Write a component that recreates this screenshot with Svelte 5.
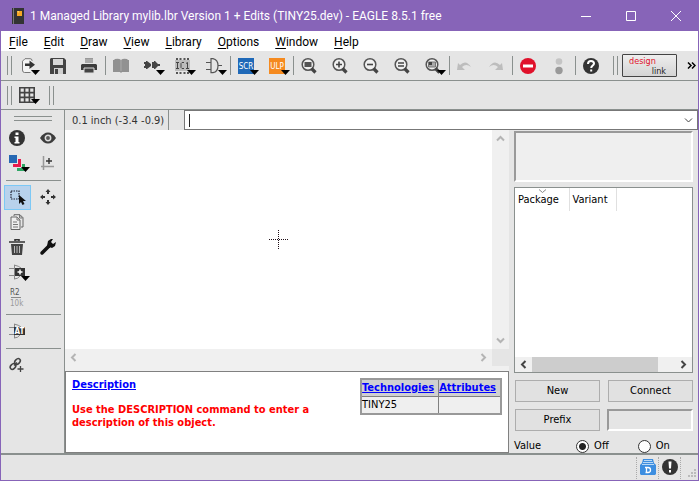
<script>
  const menus = ['File', 'Edit', 'Draw', 'View', 'Library', 'Options', 'Window', 'Help'];
  const toolbar = [
    ['export', 'save', 'print'],
    ['book', 'device', 'package', 'symbol'],
    ['scr', 'ulp'],
    ['fit', 'zoomin', 'zoomout', 'redraw', 'select'],
    ['undo', 'redo'],
    ['stop', 'go'],
    ['help']
  ];
  const palette = [
    [['info', 'show'], ['layers', 'mark']],
    [['group', 'move'], ['copy'], ['delete', 'change'], ['add'], ['value']],
    [['attribute']],
    [['link']]
  ];
  const withArrow = ['export', 'device', 'package', 'symbol', 'scr', 'ulp', 'select', 'grid', 'layers', 'add'];
  let value = $state('off');
  let command = $state('');
  let prefix = $state('');
</script>

{#snippet lens()}
  <circle cx="7" cy="6.5" r="5.8" fill="#f0f0f0" stroke="#555" stroke-width="1.5" />
  <path d="M10.500 10.500l4 4" stroke="#444" stroke-width="3.2" />
{/snippet}

{#snippet icon(name)}
  <svg class="icon" width="22" height="18" viewBox="0 0 22 18" fill="none" aria-hidden="true">
    {#if name === 'export'}
      <path d="M13 3V2.500Q13 .7 11 .7H6L3.500 3.200V12q0 2.500 2 2.500h6" stroke="#777" fill="#f4f4f4" />
      <path d="M6 5.500h4.500V2.500L16 6.800l-5.500 4.200V8H6z" fill="#333" />
    {:else if name === 'save'}
      <path d="M1 0h13l2 2v14H0V1z" fill="#444" />
      <path d="M3 1h10v6H3z" fill="#d8d8d8" /><path d="M4 10h9v6H4z" fill="#d0d0d0" /><path d="M5 11h3v5H5z" fill="#444" />
    {:else if name === 'print'}
      <path d="M4 0h8v5H4z" fill="#999" /><path d="M4 2h8M4 4h8" stroke="#bbb" />
      <path d="M1 6h14l1 1v5H0V7z" fill="#3c3c3c" /><path d="M3 10h10v5H3z" fill="#444" stroke="#ddd" />
    {:else if name === 'book'}
      <path d="M0 2h1l1-1q4-1 6 1 2-2 6-1l1 1h1v12H9l-1 1-1-1H0z" fill="#919191" /><path d="M8 2v11" stroke="#aaa" />
    {:else if name === 'device'}
      <path d="M0 4h2V3h1l4 3h1V4h2V3h1l3 3h2v2h-2l-3 3h-1v-1H8V8H7l-4 3H2v-1H0V8h1V6H0z" fill="#444" />
      <path d="M7.500 3v8" stroke="#e5e5e5" />
    {:else if name === 'package'}
      <path d="M2 0v16M5.500 0v16M9.500 0v16M13 0v16" stroke="#555" stroke-width="2" stroke-dasharray="2 12" />
      <path d="M0 2h15v11H0z" fill="#bcbcbc" />
      <path d="M1 4.500h3M2.500 4.500v6M1 10.500h3M9 4.500H7L6 5.500V9.500l1 1h2M11 5.500l1.500-1v6M11 10.500h3" stroke="#444" />
    {:else if name === 'symbol'}
      <path d="M5 .7h2q5 1 5 7t-5 7H5zM0 4.500h5M0 11.500h5M12 7.500h4" stroke="#555" stroke-width="1.200" />
    {:else if name === 'scr' || name === 'ulp'}
      <path d="M0 0h16v16H0z" fill={name === 'scr' ? '#1f69b8' : '#f58a1f'} />
      {#if name === 'scr'}
        <text x="8" y="11" text-anchor="middle" class="tag">SCR</text>
      {:else}
        <text x="8" y="11" text-anchor="middle" class="tag">ULP</text>
      {/if}
    {:else if name === 'fit'}
      {@render lens()}<path d="M3.500 4h7v5h-7z" fill="#555" />
    {:else if name === 'zoomin'}
      {@render lens()}<path d="M7 3.500v6M4 6.500h6" stroke="#444" stroke-width="1.600" />
    {:else if name === 'zoomout'}
      {@render lens()}<path d="M4 6.500h6" stroke="#444" stroke-width="1.600" />
    {:else if name === 'redraw'}
      {@render lens()}<path d="M4 5h6M4 8h6" stroke="#444" stroke-width="1.400" />
    {:else if name === 'select'}
      {@render lens()}<path d="M3.500 4h7v5h-7z" fill="#aaa" stroke="#777" /><path d="M4 4h3v3H4z" fill="#444" />
    {:else if name === 'undo'}
      <path d="M0 12l1-7 2 2q6-6 11 2-5-4-9 0l3 3z" fill="#bdbdbd" />
    {:else if name === 'redo'}
      <path d="M15 12l-1-7-2 2Q6 1 1 9q5-4 9 0l-3 3z" fill="#bdbdbd" />
    {:else if name === 'stop'}
      <circle cx="8" cy="8" r="8" fill="#e0112b" /><path d="M3 6.500h10v3H3z" fill="#fff" />
    {:else if name === 'go'}
      <circle cx="8" cy="3.500" r="3.300" fill="#c4c4c4" /><circle cx="8" cy="12.500" r="3.700" fill="#999" />
    {:else if name === 'help'}
      <circle cx="8" cy="8" r="8" fill="#333" />
      <path d="M5 6q0-3 3-3t3 2.500c0 2-2.800 2-2.800 4.500M8.200 11.500V13.500" stroke="#fff" stroke-width="2" />
    {:else if name === 'grid'}
      <path d="M.8.8h14.400v14.400H.8zM.8 5.600h14.400M.8 10.400h14.400M5.600.8v14.400M10.400.8v14.400" stroke="#444" stroke-width="1.600" />
    {:else if name === 'info'}
      <circle cx="8" cy="8" r="8" fill="#333" /><path d="M6.500 2.500h3v2.500h-3zM5.500 6.500h4v5.500h1v1.500h-5V12h1V8h-1z" fill="#fff" />
    {:else if name === 'show'}
      <path d="M0 8q3.500-5.500 8-5.500T16 8q-3.500 5.500-8 5.500T0 8z" fill="#3c3c3c" />
      <circle cx="8" cy="8" r="2.700" fill="#555" stroke="#ddd" stroke-width="1.500" />
    {:else if name === 'layers'}
      <path d="M8 13h5V9h3v7H8z" fill="#2fa765" /><path d="M9 4h3v8H4V9h5z" fill="#e8194b" /><path d="M0 0h8v8H0z" fill="#2668b3" />
    {:else if name === 'mark'}
      <path d="M3.500 1v14M1 11.500h13" stroke="#999" stroke-width="1.500" /><path d="M9 3v6M6 6h6" stroke="#333" stroke-width="1.400" />
    {:else if name === 'group'}
      <path d="M2 2h8v8H2z" stroke="#223" stroke-width="1.200" stroke-dasharray="1.500 1" /><path d="M10 6v9l2-2 1.500 3 2-1-1.500-3h3z" fill="#111" />
    {:else if name === 'move'}
      <path d="M8 0l2.500 3H9v2H7V3H5.500zM8 16l2.500-3H9v-2H7v2H5.500zM0 8l3-2.500V7h2v2H3v1.500zM16 8l-3-2.500V7h-2v2h2v1.500z" fill="#333" />
    {:else if name === 'copy'}
      <path d="M5 2V.7h6l3 3V13h-2" stroke="#666" /><path d="M2 3h6l3 3v9.500H2z" stroke="#666" fill="#eee" />
      <path d="M8 3v3h3zM10.500 1v3h3zM4 8h4M4 10.500h5M4 13h5" stroke="#777" />
    {:else if name === 'delete'}
      <path d="M6 2V.7h4V2M0 3h16" stroke="#333" stroke-width="1.600" /><path d="M2 5h12l-1 11H3z" fill="#444" />
      <path d="M5.500 7v7M8 7v7M10.500 7v7" stroke="#bbb" />
    {:else if name === 'change'}
      <path d="M2 14l7-7" stroke="#111" stroke-width="3.500" stroke-linecap="round" /><path d="M7 7L8 2l3-2h2l-2 3 2 2 3-2-1 4-3 2z" fill="#111" />
    {:else if name === 'add'}
      <path d="M5 1q5 1 7 3M5 15q4 0 6-3M5.500 1v14M0 4.500h5M0 11.500h5" stroke="#888" /><path d="M6 4h10v8H6z" fill="#333" />
      <path d="M11 5.500v5M8.500 8h5" stroke="#fff" stroke-width="1.500" />
    {:else if name === 'value'}
      <text x="1" y="6" class="val">R2</text><path d="M2 8.500h10" stroke="#888" /><text x="1" y="17" class="val pale">10k</text>
    {:else if name === 'attribute'}
      <path d="M5 1q5 1 7 3M5 15q4 0 6-3M5.500 1v14M0 4.500h5M0 11.500h5" stroke="#888" /><path d="M5 4h11v8H5z" fill="#333" />
      <text x="10.500" y="11" text-anchor="middle" class="at">AT</text>
    {:else if name === 'link'}
      <ellipse cx="8.500" cy="4.500" rx="3.200" ry="2.300" transform="rotate(-45 8.500 4.500)" stroke="#444" stroke-width="1.500" />
      <ellipse cx="4" cy="9.500" rx="3.200" ry="2.300" transform="rotate(-45 4 9.500)" stroke="#444" stroke-width="1.500" />
      <path d="M5 8.500l3-3" stroke="#444" stroke-width="1.500" /><path d="M11.500 9v6M8.500 12h6" stroke="#444" stroke-width="1.300" />
    {/if}
    {#if withArrow.includes(name)}
      <path d="M12 12h9l-4.500 5z" fill="#000" />
    {/if}
  </svg>
{/snippet}

{#snippet chevron(dir)}
  <svg width="9" height="9" viewBox="0 0 9 9" fill="none" aria-hidden="true">
    {#if dir === 'left'}<path d="M6.500 1L3 4.500 6.500 8" />
    {:else if dir === 'right'}<path d="M2.500 1L6 4.500 2.500 8" />
    {:else if dir === 'up'}<path d="M1 6.500L4.500 3 8 6.500" />
    {:else}<path d="M1 2.500L4.500 6 8 2.500" />{/if}
  </svg>
{/snippet}

<div class="window">
  <header>
    <svg width="14" height="16" viewBox="0 0 14 16" aria-hidden="true">
      <path d="M1 0h12v16H1z" fill="#333" /><path d="M2.500 0v16" stroke="#777" /><path d="M6 3h5v5H6z" fill="#f6a623" /><path d="M6 3h2v2z" fill="#fbd36b" />
    </svg>
    <h1>1 Managed Library mylib.lbr Version 1 + Edits (TINY25.dev) - EAGLE 8.5.1 free</h1>
    <div class="controls">
      <button aria-label="Minimize"><svg width="10" height="10" viewBox="0 0 10 10"><path d="M0 5.500h10" /></svg></button>
      <button aria-label="Maximize"><svg width="10" height="10" viewBox="0 0 10 10"><path d="M.5.5h9v9h-9z" /></svg></button>
      <button aria-label="Close"><svg width="10" height="10" viewBox="0 0 10 10"><path d="M0 0l10 10M10 0L0 10" /></svg></button>
    </div>
  </header>

  <nav>
    {#each menus as m}
      <button><u>{m[0]}</u>{m.slice(1)}</button>
    {/each}
  </nav>

  <div class="bar">
    <i class="handle"></i>
    {#each toolbar as group, g}
      {#if g}<i class="sep"></i>{/if}
      {#each group as name}
        <button class="tool" aria-label={name}>{@render icon(name)}</button>
      {/each}
    {/each}
    <i class="handle"></i>
    <button class="design"><span>design</span><b>link</b></button>
    <button class="more" aria-label="More tools">
      <svg width="9" height="7" viewBox="0 0 9 7" fill="none"><path d="M1 .5l3 3-3 3M5 .5l3 3-3 3" stroke="#000" stroke-width="1.500" /></svg>
    </button>
  </div>
  <div class="bar low">
    <i class="handle"></i>
    <button class="tool" aria-label="grid">{@render icon('grid')}</button>
    <i class="handle"></i>
  </div>

  <main>
    <aside>
      <i class="grip"></i>
      {#each palette as group, g}
        {#if g}<hr />{/if}
        {#each group as row}
          <div class="row">
            {#each row as name}
              <button class="pal" class:active={name === 'group'} aria-label={name}>{@render icon(name)}</button>
            {/each}
          </div>
        {/each}
      {/each}
    </aside>

    <div class="work">
      <div class="command">
        <span class="coords">0.1 inch (-3.4 -0.9)</span>
        <div class="combo">
          <i class="caret"></i>
          <input type="text" aria-label="Command line" bind:value={command} />
          <button aria-label="Command history">{@render chevron('down')}</button>
        </div>
      </div>

      <div class="split">
        <section class="editor">
          <div class="canvas">
            <svg width="19" height="19" viewBox="0 0 19 19" aria-hidden="true">
              <path d="M0 9.500h19M9.500 0v19" stroke="#201018" stroke-dasharray="1 1" />
            </svg>
          </div>
          <div class="vscroll">
            <button aria-label="Scroll up">{@render chevron('up')}</button>
            <button aria-label="Scroll down">{@render chevron('down')}</button>
          </div>
          <div class="hscroll">
            <button aria-label="Scroll left">{@render chevron('left')}</button>
            <button aria-label="Scroll right">{@render chevron('right')}</button>
          </div>
          <div class="corner"></div>
          <div class="desc">
            <div class="copy">
              <a href="#description">Description</a>
              <p>Use the DESCRIPTION command to enter a description of this object.</p>
            </div>
            <table class="tech">
              <thead><tr><th><a href="#technologies">Technologies</a></th><th><a href="#attributes">Attributes</a></th></tr></thead>
              <tbody><tr><td>TINY25</td><td></td></tr></tbody>
            </table>
          </div>
        </section>

        <section class="side">
          <div class="preview"></div>
          <div class="list">
            <table>
              <thead>
                <tr>
                  <th class="pkg"><svg width="7" height="4" viewBox="0 0 7 4" fill="none"><path d="M0 .5l3.500 3L7 .5" stroke="#888" /></svg>Package</th>
                  <th class="variant">Variant</th>
                </tr>
              </thead>
            </table>
            <div class="listscroll">
              <button aria-label="Scroll list left">{@render chevron('left')}</button>
              <div class="track"><div class="thumb"></div></div>
              <button aria-label="Scroll list right">{@render chevron('right')}</button>
            </div>
          </div>
          <div class="form">
            <button>New</button>
            <button>Connect</button>
            <button>Prefix</button>
            <input type="text" aria-label="Prefix" bind:value={prefix} />
          </div>
          <div class="radios" role="radiogroup" aria-labelledby="value-label">
            <span id="value-label">Value</span>
            <label class="off"><input type="radio" name="value" value="off" bind:group={value} />Off</label>
            <label class="on"><input type="radio" name="value" value="on" bind:group={value} />On</label>
          </div>
        </section>
      </div>
    </div>
  </main>

  <footer>
    <span>
      <svg width="16" height="16" viewBox="0 0 16 16" fill="none">
        <path d="M3 0h10l1 4 2 2v9l-1 1H1l-1-1V6l2-2z" fill="#3d8ee0" /><path d="M4 1.500h8M3 3.500h10M2 5.500h12" stroke="#b9d8f5" />
        <path d="M5 8.500h3q2.500 0 2.500 2.500t-2.500 2.500H5.500M6.500 8v6" stroke="#fff" stroke-width="1.300" />
      </svg>
    </span>
    <span>
      <svg width="16" height="16" viewBox="0 0 16 16"><circle cx="8" cy="8" r="8" fill="#333" /><path d="M6.500 2.500h3L9 9.500H7zM7 11h2v2.500H7z" fill="#fff" /></svg>
    </span>
    <svg class="size" width="9" height="9" viewBox="0 0 9 9"><path d="M6 0h2v2H6zM3 3h2v2H3zM6 3h2v2H6zM0 6h2v2H0zM3 6h2v2H3zM6 6h2v2H6z" fill="#bbb" /></svg>
  </footer>
</div>

<style>
  :global(body) { margin: 0; }
  .window, .window * { box-sizing: border-box; }
  .window {
    display: flex;
    flex-direction: column;
    min-height: 100vh;
    background: #e5e5e5;
    border: 1px solid #8764b8;
    border-top: 0;
    font: 11px/14px "DejaVu Sans Condensed", "DejaVu Sans", sans-serif;
    color: #000;
  }
  button { border: 0; padding: 0; margin: 0; background: none; font: inherit; color: inherit; }
  svg { display: block; }
  header { display: flex; align-items: center; height: 31px; padding-left: 10px; background: #8764b8; color: #fff; }
  h1 { flex: 1; margin: 0 0 0 5px; font: 12px/16px Roboto, sans-serif; white-space: nowrap; }
  .controls { display: flex; }
  .controls button { width: 45px; height: 30px; display: grid; place-items: center; }
  .controls path { fill: none; stroke: #fff; }
  nav { display: flex; height: 20px; background: #fff; font: 12px/22px Roboto, sans-serif; }
  nav button { padding: 0 8px; }
  nav u { text-underline-offset: 2px; }
  .bar { display: flex; align-items: center; height: 30px; border-bottom: 1px solid #8a908e; }
  .bar.low { height: 29px; }
  .handle { flex: none; width: 5px; height: 19px; margin: 0 0 0 6px; border: solid #8a908e; border-width: 0 1px; }
  .sep { flex: none; width: 1px; height: 19px; background: #8a908e; }
  .tool { flex: none; width: 31px; height: 24px; padding: 2px 0 0 7px; }
  .icon { overflow: visible; }
  .tag { font: 8px "DejaVu Sans Condensed", sans-serif; fill: #fff; }
  .val { font: 8px "DejaVu Sans Condensed", sans-serif; fill: #555; }
  .val.pale { fill: #999; }
  .at { font: bold 8px "DejaVu Sans Condensed", sans-serif; fill: #fff; }
  .design {
    flex: none; width: 55px; height: 23px; margin-left: 4px; padding: 0 10px 0 6px; display: flex; flex-direction: column; justify-content: center;
    border: 1px solid #444; border-radius: 1px; background: linear-gradient(#eee, #d4d4d4); font-size: 9px; line-height: 10px; text-align: left; color: #e0112b;
  }
  .design b { align-self: flex-end; font-weight: normal; color: #222; }
  .more { margin-left: auto; padding-right: 2px; }
  main { flex: 1; display: flex; border-bottom: 2px solid #8a908e; }
  aside { flex: none; width: 64px; border-right: 1px solid #8a908e; padding-top: 6px; }
  .grip { display: block; height: 5px; margin: 0 12px 5px 13px; border: solid #8a908e; border-width: 1px 0; }
  hr { height: 1px; margin: 4px 3px 4px 5px; border: 0; background: #8a908e; }
  .row { display: flex; height: 25px; }
  .pal { width: 31px; height: 25px; padding: 0 0 0 8px; }
  .pal.active { width: 27px; margin: 0 1px 0 3px; padding: 0 0 0 4px; border: 1px solid #7cc8f5; background: #b8d2ec; }
  .work { flex: 1; min-width: 0; display: flex; flex-direction: column; }
  .command { display: flex; height: 20px; }
  .coords { width: 104px; padding: 4px 0 0 7px; border-right: 1px solid #8a908e; color: #333; white-space: nowrap; }
  .combo { flex: 1; display: flex; align-items: center; margin-left: 15px; border: 1px solid #777; background: #fff; }
  .combo input { flex: 1; min-width: 0; border: 0; padding: 0; outline: 0; background: none; font: inherit; }
  .combo button { padding: 0 4px; stroke: #444; }
  .caret { width: 1px; height: 13px; margin-left: 4px; background: #222; }
  .split { flex: 1; display: grid; grid-template-columns: minmax(0, 1fr) 189px; }
  .editor { display: grid; grid-template: minmax(219px, 1fr) 17px 87px / minmax(0, 1fr) 17px; background: #f0f0f0; }
  .canvas { display: grid; place-items: center; background: #fff; }
  .vscroll, .hscroll { display: flex; justify-content: space-between; padding: 4px; stroke: #b4b4b4; stroke-width: 2; }
  .vscroll { flex-direction: column; }
  .hscroll { align-items: center; }
  .corner { background: #e5e5e5; }
  .desc { grid-column: 1 / -1; display: flex; align-items: flex-start; justify-content: space-between; margin-top: 5px; padding: 6px; border: 1px solid #808080; background: #fff; }
  .copy { width: 250px; font-weight: bold; line-height: 13px; }
  .copy p { margin: 12px 0 0; color: #f00; }
  a { color: #00f; font-weight: bold; }
  .tech { border-collapse: collapse; border: 2px solid #999; background: #efefef; }
  .tech th { background: #d0d0d0; }
  .tech th, .tech td { height: 17px; padding: 0 4px 0 0; border: 1px solid #808080; text-align: left; line-height: 16px; }
  .side { display: flex; flex-direction: column; padding: 1px 5px 0 5px; }
  .preview { height: 51px; border: 2px solid; border-color: #999 #fff #fff #999; background: #efefef; }
  .list { flex: 1; display: flex; flex-direction: column; justify-content: space-between; margin-top: 5px; border: 1px solid #8a908e; background: #fff; }
  .list table { border-collapse: collapse; align-self: flex-start; }
  .list th { height: 23px; padding: 0 0 0 3px; border-right: 1px solid #e0e0e0; font-weight: normal; text-align: left; line-height: 14px; vertical-align: top; }
  .list .pkg { width: 54px; padding-top: 1px; }
  .list .variant { width: 47px; padding-top: 5px; }
  .pkg svg { margin: 0 0 0 21px; }
  .listscroll { display: flex; align-items: center; height: 15px; background: #f0f0f0; stroke: #444; stroke-width: 2; }
  .listscroll button { padding: 0 4px; }
  .track { flex: 1; height: 15px; }
  .thumb { width: 88%; height: 100%; background: #cdcdcd; }
  .form { display: grid; grid-template-columns: 1fr 1fr; gap: 7px 7px; margin: 7px 0 0; }
  .form button { height: 22px; margin-left: 1px; border: 1px solid #adadad; background: #e1e1e1; }
  .form input { width: 100%; min-width: 0; height: 22px; border: 2px solid; border-color: #999 #fff #fff #999; background: #e5e5e5; font: inherit; }
  .radios { display: flex; align-items: center; height: 14px; margin-top: 8px; }
  .radios label { display: flex; align-items: center; gap: 5px; }
  .radios .off { margin-left: 35px; }
  .radios .on { margin-left: 29px; }
  .radios input { appearance: none; width: 13px; height: 13px; margin: 0; border: 1px solid #333; border-radius: 50%; background: #fff; }
  .radios input:checked { background: radial-gradient(circle, #222 0 3px, #fff 4px); }
  footer { display: flex; justify-content: flex-end; align-items: center; height: 25px; }
  footer span { height: 22px; padding: 2px 2px 0 3px; border-left: 1px dotted #aaa; }
  footer span + span { border-right: 1px dotted #aaa; }
  .size { align-self: flex-end; margin: 0 1px 2px 7px; }
</style>
